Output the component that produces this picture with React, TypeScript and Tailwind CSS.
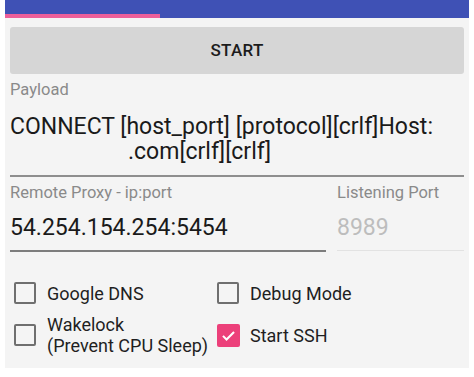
import React from "react";

function Box({ checked }: { checked?: boolean }) {
    if (checked) {
        return (
            <div className="w-[23px] h-[23px] rounded-[2px] bg-[#ec407a] flex items-center justify-center shrink-0">
                <svg viewBox="0 0 24 24" className="w-[19px] h-[19px]" fill="none" stroke="#fff" strokeWidth="2.6">
                    <path d="M5 12.5l4.5 4.5L19 7.5" />
                </svg>
            </div>
        );
    }
    return <div className="w-[22px] h-[22px] rounded-[2px] border-2 border-[#6f6f6f] shrink-0" />;
}

export default function App() {
    return (
        <div className="w-[474px] h-[377px] bg-white px-[5px] font-['Roboto',sans-serif]">
            <div className="h-[368px] bg-[#f4f4f4] flex flex-col">
                <div className="h-[18px] bg-[#3f51b5] flex flex-col justify-end">
                    <div className="h-[4px] w-[155px] bg-[#ec5f9a]" />
                </div>

                <div className="px-[5px] pt-[9px]">
                    <button className="w-full h-[47px] bg-[#d6d6d6] rounded-[3px] text-[17px] font-medium text-[#1c1c1c] tracking-[0.3px]">
                        START
                    </button>
                </div>

                <div className="px-[5px] mt-[6px]">
                    <div className="text-[16.5px] text-[#8a8a8a] leading-[20px]">Payload</div>
                    <div className="mt-[14px] text-[23px] text-[#1a1a1a] leading-[25px]">
                        <div>CONNECT [host_port] [protocol][crlf]Host:</div>
                        <div className="pl-[118px]">.com[crlf][crlf]</div>
                    </div>
                    <div className="mt-[11px] h-[2px] bg-[#8e8e8e]" />
                </div>

                <div className="px-[5px] mt-[6px] flex gap-[11px]">
                    <div className="w-[316px]">
                        <div className="text-[16.5px] text-[#8a8a8a] leading-[20px]">Remote Proxy - ip:port</div>
                        <div className="mt-[12px] text-[23px] text-[#1a1a1a] leading-[26px]">54.254.154.254:5454</div>
                        <div className="mt-[9px] h-[2px] bg-[#7d7d7d]" />
                    </div>
                    <div className="flex-1">
                        <div className="text-[16.5px] text-[#8a8a8a] leading-[20px]">Listening Port</div>
                        <div className="mt-[12px] text-[23px] text-[#bdbdbd] leading-[26px]">8989</div>
                        <div className="mt-[9px] h-[1px] bg-[#e2e2e2]" />
                    </div>
                </div>

                <div className="pl-[9px] mt-[30px] grid grid-cols-[203px_1fr] gap-y-[10px] text-[18px] text-[#1f1f1f] leading-[21px]">
                    <div className="flex items-center gap-[11px] h-[22px]">
                        <Box />
                        <span>Google DNS</span>
                    </div>
                    <div className="flex items-center gap-[11px] h-[22px]">
                        <Box />
                        <span>Debug Mode</span>
                    </div>
                    <div className="flex items-center gap-[11px]">
                        <Box />
                        <span>
                            Wakelock
                            <br />
                            (Prevent CPU Sleep)
                        </span>
                    </div>
                    <div className="flex items-center gap-[10px]">
                        <Box checked />
                        <span>Start SSH</span>
                    </div>
                </div>
            </div>
        </div>
    );
}
